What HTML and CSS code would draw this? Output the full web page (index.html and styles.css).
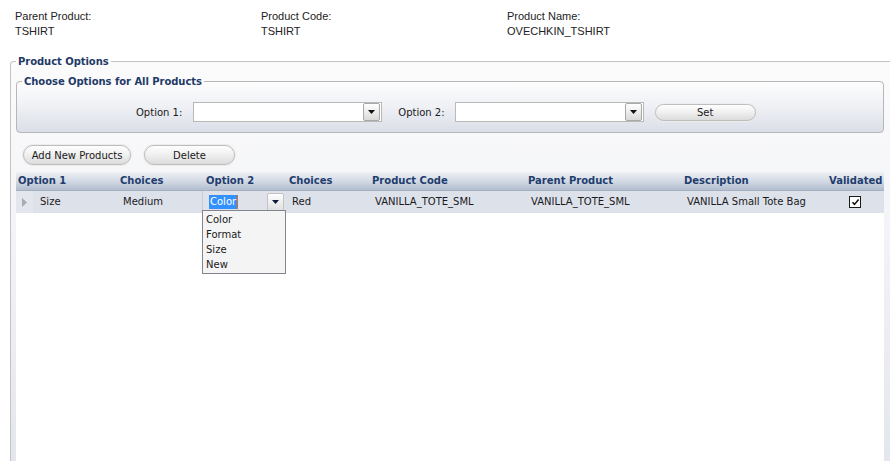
FILE: index.html
```html
<!DOCTYPE html>
<html>
<head>
<meta charset="utf-8">
<link rel="stylesheet" href="styles.css">
</head>
<body>
<div class="info">
  <div class="info-col"><div>Parent Product:</div><div>TSHIRT</div></div>
  <div class="info-col"><div>Product Code:</div><div>TSHIRT</div></div>
  <div class="info-col"><div>Product Name:</div><div>OVECHKIN_TSHIRT</div></div>
</div>
<fieldset class="outer">
  <legend>Product Options</legend>
  <fieldset class="inner">
    <legend>Choose Options for All Products</legend>
    <div class="opt-row">
      <span class="opt-label">Option 1:</span>
      <div class="combo"><span class="combo-btn"><svg width="7" height="4" viewBox="0 0 7 4"><path d="M0 0h7L3.5 4z" fill="#111"/></svg></span></div>
      <span class="opt-label second">Option 2:</span>
      <div class="combo"><span class="combo-btn"><svg width="7" height="4" viewBox="0 0 7 4"><path d="M0 0h7L3.5 4z" fill="#111"/></svg></span></div>
      <button class="pill set">Set</button>
    </div>
  </fieldset>
  <div class="toolbar">
    <button class="pill add">Add New Products</button>
    <button class="pill del">Delete</button>
  </div>
  <div class="grid">
    <div class="grid-head">
      <div class="hc first">Option 1</div>
      <div class="hc">Choices</div>
      <div class="hc">Option 2</div>
      <div class="hc">Choices</div>
      <div class="hc">Product Code</div>
      <div class="hc">Parent Product</div>
      <div class="hc">Description</div>
      <div class="hc">Validated</div>
    </div>
    <div class="grid-row">
      <div class="dc first"><span class="row-ind"><svg width="5" height="9" viewBox="0 0 5 9"><path d="M0 0l5 4.5L0 9z" fill="#a8abb2"/></svg></span><span>Size</span></div>
      <div class="dc">Medium</div>
      <div class="dc editor"><span class="sel">Color</span><span class="ed-btn"><svg width="7" height="4" viewBox="0 0 7 4"><path d="M0 0h7L3.5 4z" fill="#0d1a3a"/></svg></span></div>
      <div class="dc">Red</div>
      <div class="dc">VANILLA_TOTE_SML</div>
      <div class="dc">VANILLA_TOTE_SML</div>
      <div class="dc">VANILLA Small Tote Bag</div>
      <div class="dc check"><span class="cb"><svg width="9" height="9" viewBox="0 0 9 9"><path d="M1.5 4.2l2 2.2L7.6 1.6" fill="none" stroke="#111" stroke-width="1.6"/></svg></span></div>
    </div>
    <ul class="dropdown">
      <li>Color</li>
      <li>Format</li>
      <li>Size</li>
      <li>New</li>
    </ul>
  </div>
</fieldset>
</body>
</html>
```
FILE: styles.css
```css
html, body {
  margin: 0;
  padding: 0;
  background: #ffffff;
  width: 890px;
  height: 461px;
  overflow: hidden;
}
body {
  font-family: "DejaVu Sans", sans-serif;
  font-size: 10px;
  color: #1a1a1a;
}
.info {
  display: flex;
  padding: 9px 0 0 15px;
  font-family: "Liberation Sans", Arial, sans-serif;
  font-size: 11px;
  line-height: 15px;
  color: #222;
}
.info-col {
  width: 246px;
}
fieldset {
  min-width: 0;
  margin: 0;
}
legend {
  font-family: "DejaVu Sans", sans-serif;
  font-weight: bold;
  font-size: 10px;
  line-height: 13px;
  color: #1f3a68;
  padding: 0 2px;
  letter-spacing: -0.05px;
}
.outer {
  margin: 16px 0 0 10px;
  padding: 0 6px 0 5px;
  border: 1px solid #c3c3c3;
  border-right: none;
  border-bottom: none;
  border-top-left-radius: 4px;
  background: linear-gradient(#fbfbfc, #f3f4f7 40%, #e2e5ec);
  height: 420px;
}
.inner {
  margin-top: 7px;
  padding: 0 0 0 5px;
  border: 1px solid #b7b7b7;
  border-radius: 4px;
  background: linear-gradient(#fdfdfe, #eef0f4 50%, #dadee7);
}
.opt-row {
  display: flex;
  align-items: center;
  margin: 14px 0 10px 114px;
  height: 20px;
}
.opt-label {
  margin-right: 11px;
  color: #1a1a1a;
}
.opt-label.second {
  margin-left: 16px;
  margin-right: 10px;
}
.combo {
  width: 186px;
  height: 18px;
  border: 1px solid #b9b9b9;
  background: #fff;
  display: flex;
  justify-content: flex-end;
  align-items: center;
  padding-right: 1px;
}
.combo-btn {
  width: 15px;
  height: 16px;
  border: 1px solid #a9a9a9;
  border-radius: 2px;
  background: linear-gradient(#ffffff, #d9d9d9);
  display: flex;
  align-items: center;
  justify-content: center;
}
.pill {
  font-family: "DejaVu Sans", sans-serif;
  font-size: 10px;
  color: #1a1a1a;
  height: 20px;
  border: 1px solid #bdbdbd;
  border-radius: 10px;
  background: linear-gradient(#fefefe, #f1f1f1 45%, #dcdcdc);
  box-shadow: 0 0 0 1px #ececec;
  padding: 0;
  margin: 0;
}
.set {
  width: 101px;
  height: 17px;
  margin-left: 11px;
  border-radius: 9px;
}
.toolbar {
  display: flex;
  gap: 13px;
  padding: 12px 0 0 7px;
  height: 20px;
  margin-bottom: 7px;
}
.add {
  width: 108px;
}
.del {
  width: 91px;
}
.grid {
  position: relative;
  background: #ffffff;
  height: 289px;
}
.grid-head, .grid-row {
  display: grid;
  grid-template-columns: 101px 86px 83px 83px 156px 156px 145px 58px;
}
.grid-head {
  height: 18px;
  background: linear-gradient(#eef1f5, #d3dae5 50%, #b2bdcf);
  border-bottom: 1px solid #a6b0c0;
}
.hc {
  font-weight: bold;
  color: #1f3d6e;
  line-height: 18px;
  padding-left: 3px;
  white-space: nowrap;
}
.hc.first {
  padding-left: 2px;
}
.grid-row {
  height: 22px;
  background: #dde1ea;
}
.dc {
  line-height: 22px;
  padding-left: 6px;
  white-space: nowrap;
  color: #1a1a1a;
}
.dc.first {
  padding-left: 0;
  display: flex;
}
.row-ind {
  width: 17px;
  height: 22px;
  background: #e3e6ed;
  display: flex;
  align-items: center;
  justify-content: center;
  margin-right: 7px;
}
.editor {
  display: flex;
  align-items: center;
  justify-content: space-between;
  padding: 0 2px 0 6px;
  margin-left: -1px;
  background: #dfe2e9;
  border-left: 1px solid #c9ccd3;
}
.sel {
  background: #3391ff;
  color: #ffffff;
  line-height: 14px;
  padding: 0 1px 0 1px;
  border-right: 1px solid #e36c12;
}
.ed-btn {
  width: 15px;
  height: 17px;
  border: 1px solid #c3c3c3;
  border-radius: 2px;
  background: linear-gradient(#ffffff, #dedede);
  display: flex;
  align-items: center;
  justify-content: center;
}
.check {
  display: flex;
  align-items: center;
  justify-content: center;
  padding-left: 0;
}
.cb {
  width: 10px;
  height: 10px;
  border: 1px solid #1a1a1a;
  background: #fff;
  display: flex;
  align-items: center;
  justify-content: center;
}
.dropdown {
  position: absolute;
  left: 186px;
  top: 38px;
  width: 79px;
  margin: 0;
  padding: 1px 0 1px 3px;
  list-style: none;
  border: 1px solid #82858c;
  background: #f4f4f5;
  line-height: 15px;
  color: #1a1a1a;
}
```
